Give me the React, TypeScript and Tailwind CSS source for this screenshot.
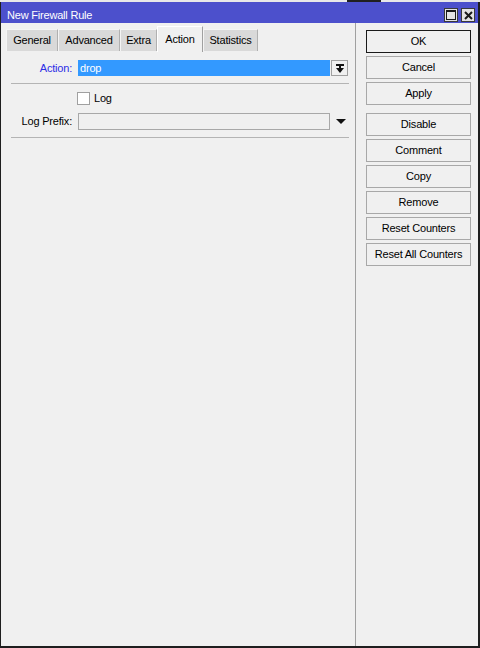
const tabs = [
  { label: "General", w: "w-[52px]" },
  { label: "Advanced", w: "w-[62px]" },
  { label: "Extra", w: "w-[37px]" },
  { label: "Action", w: "w-[46px]", active: true },
  { label: "Statistics", w: "w-[55px]" },
];

function TitleButton({ kind }: { kind: "max" | "close" }) {
  return (
    <div className="w-[14px] h-[14px] border border-[#3a3a3a] bg-[#e4e4e4] flex items-center justify-center">
      {kind === "max" ? (
        <svg width="10" height="10" viewBox="0 0 10 10">
          <rect x="0.5" y="0.5" width="9" height="9" fill="none" stroke="#1a1a1a" strokeWidth="1" />
          <rect x="0" y="0" width="10" height="2" fill="#1a1a1a" />
        </svg>
      ) : (
        <svg width="9" height="9" viewBox="0 0 9 9">
          <path d="M1 1 L8 8 M8 1 L1 8" stroke="#1a1a1a" strokeWidth="2" />
        </svg>
      )}
    </div>
  );
}

function SideButton({ label, primary }: { label: string; primary?: boolean }) {
  return (
    <div
      className={
        primary
          ? "w-[105px] h-[23px] border border-[#1a1a1a] bg-[#f0f0f0] flex items-center justify-center"
          : "w-[105px] h-[23px] border border-[#a8a8a8] bg-[#f0f0f0] flex items-center justify-center"
      }
    >
      {label}
    </div>
  );
}

function Separator() {
  return <div className="ml-[10px] w-[338px] h-[1px] bg-[#b4b4b4]" />;
}

export default function App() {
  return (
    <div className="w-[480px] h-[648px] flex flex-col bg-[#f0f0f0] text-[11px] leading-[13px] tracking-[-0.2px] text-black font-['Liberation_Sans',Arial,sans-serif] overflow-hidden">
      {/* strip behind the window */}
      <div className="h-[2px] bg-[#e8e8e8] flex">
        <div className="ml-[347px] w-[34px] bg-[#202020]" />
      </div>

      <div className="flex-1 flex flex-col border-l border-r-2 border-b-2 border-[#1e1e1e]">
        {/* title bar */}
        <div className="h-[21px] bg-[#4c50cc] flex items-start pl-[6px] pr-[3px]">
          <span className="mt-[7px] text-white">New Firewall Rule</span>
          <div className="ml-auto mt-[6px] flex gap-[3px]">
            <TitleButton kind="max" />
            <TitleButton kind="close" />
          </div>
        </div>

        <div className="flex-1 flex">
          {/* left panel */}
          <div className="w-[355px] border-r border-[#a0a0a0] flex flex-col">
            <div className="mt-[3px] pl-[5px] h-[25px] flex items-end">
              {tabs.map((t) =>
                t.active ? (
                  <div
                    key={t.label}
                    className={`${t.w} h-[26px] -mb-[1px] bg-[#f0f0f0] border-t border-l border-white border-r border-r-[#a0a0a0] flex items-center justify-center`}
                  >
                    {t.label}
                  </div>
                ) : (
                  <div
                    key={t.label}
                    className={`${t.w} h-[22px] bg-[#d9d9d9] border-t border-l border-[#f4f4f4] border-r border-r-[#b0b0b0] flex items-center justify-center`}
                  >
                    {t.label}
                  </div>
                )
              )}
            </div>

            {/* Action row */}
            <div className="mt-[9px] h-[16px] flex items-center">
              <span className="w-[71px] text-right text-[#2d2de6]">Action:</span>
              <div className="ml-[6px] w-[252px] h-[16px] bg-[#3399ff] text-white pl-[2px] flex items-center">
                drop
              </div>
              <div className="ml-[1px] w-[17px] h-[16px] border border-[#a0a0a0] bg-[#f0f0f0] flex items-center justify-center">
                <svg width="8" height="9" viewBox="0 0 8 9">
                  <rect x="0" y="0" width="8" height="2" fill="#111" />
                  <rect x="3" y="2" width="2" height="3" fill="#111" />
                  <polygon points="0,4 8,4 4,9" fill="#111" />
                </svg>
              </div>
            </div>

            <div className="mt-[7px]">
              <Separator />
            </div>

            {/* Log row */}
            <div className="mt-[8px] h-[13px] flex items-center">
              <div className="ml-[76px] w-[13px] h-[13px] border border-[#a0a0a0] bg-white" />
              <span className="ml-[4px]">Log</span>
            </div>

            {/* Log Prefix row */}
            <div className="mt-[8px] h-[17px] flex items-center">
              <span className="w-[71px] text-right">Log Prefix:</span>
              <div className="ml-[6px] w-[252px] h-[17px] border border-[#a8a8a8] bg-[#f0f0f0]" />
              <svg className="ml-[6px]" width="10" height="5" viewBox="0 0 10 5">
                <polygon points="0,0 10,0 5,5" fill="#111" />
              </svg>
            </div>

            <div className="mt-[7px]">
              <Separator />
            </div>
          </div>

          {/* right button column */}
          <div className="pt-[7px] pl-[10px] flex flex-col gap-[3px]">
            <SideButton label="OK" primary />
            <SideButton label="Cancel" />
            <SideButton label="Apply" />
            <div className="mt-[5px]">
              <SideButton label="Disable" />
            </div>
            <SideButton label="Comment" />
            <SideButton label="Copy" />
            <SideButton label="Remove" />
            <SideButton label="Reset Counters" />
            <SideButton label="Reset All Counters" />
          </div>
        </div>
      </div>
    </div>
  );
}
